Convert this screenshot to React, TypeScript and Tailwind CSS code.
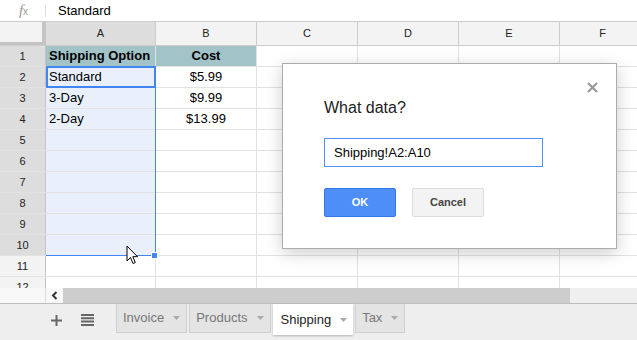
import React from 'react';

const rows: { n: number; a?: string; b?: string }[] = [
  { n: 1, a: 'Shipping Option', b: 'Cost' },
  { n: 2, a: 'Standard', b: '$5.99' },
  { n: 3, a: '3-Day', b: '$9.99' },
  { n: 4, a: '2-Day', b: '$13.99' },
  { n: 5 }, { n: 6 }, { n: 7 }, { n: 8 }, { n: 9 }, { n: 10 }, { n: 11 }, { n: 12 },
];

const Caret = () => (
  <svg width="7" height="4" viewBox="0 0 7 4" className="ml-[9px]">
    <path d="M0 0 L7 0 L3.5 4 Z" fill="#aaaaaa" />
  </svg>
);

const Tab = ({ label, active }: { label: string; active?: boolean }) => (
  <div
    className={
      active
        ? 'flex h-[31px] items-center bg-white pl-[8px] pr-[6px] text-[#222] shadow-[0_1px_2px_rgba(0,0,0,0.25)]'
        : 'flex h-[29px] items-center border border-t-0 border-[#cfcfcf] bg-[#e4e4e4] pl-[6px] pr-[6px] text-[#777]'
    }
  >
    <span className="text-[13px]">{label}</span>
    <Caret />
  </div>
);

export default function App() {
  return (
    <div className="relative flex h-[340px] w-[637px] flex-col overflow-hidden bg-white font-['Liberation_Sans',Arial,sans-serif] text-[#222]">
      {/* formula bar */}
      <div className="flex h-[21px] items-center">
        <div className="flex w-[45px] justify-center pl-[2px]">
          <span className="font-['Liberation_Serif',serif] text-[15px] italic leading-none text-[#999]">
            f<span className="text-[10px] not-italic font-['Liberation_Sans',sans-serif]">x</span>
          </span>
        </div>
        <div className="h-[12px] w-px bg-[#dcdcdc]" />
        <span className="ml-[12px] text-[13px] text-black">Standard</span>
      </div>

      {/* grid */}
      <div className="h-[267px] overflow-hidden">
        <div className="flex h-[25px] border-y border-[#cccccc] text-[11px]">
          <div className="w-[46px] border-r-[4px] border-b-[3px] border-[#c4c4c4] bg-[#f3f3f3]" />
          <div className="flex w-[110px] items-center justify-center border-r border-[#cccccc] bg-[#dddddd]">A</div>
          {['B', 'C', 'D', 'E'].map((c) => (
            <div key={c} className="flex w-[101px] items-center justify-center border-r border-[#cccccc] bg-[#f3f3f3]">{c}</div>
          ))}
          <div className="flex flex-1 items-center justify-center bg-[#f3f3f3] pl-[8px]">F</div>
        </div>
        {rows.map((r) => {
          const sel = r.n >= 2 && r.n <= 10;
          const head = r.n === 1;
          return (
            <div key={r.n} className="flex h-[21px] border-b border-[#e2e2e2] text-[13px]">
              <div
                className={`flex w-[46px] items-center justify-center border-r border-[#c4c4c4] text-[11px] ${
                  r.n <= 10 ? 'bg-[#dddddd]' : 'bg-[#f3f3f3]'
                }`}
              >
                {r.n}
              </div>
              <div
                className={`flex w-[110px] items-center border-r border-[#e2e2e2] pl-[3px] text-black ${
                  head ? 'bg-[#a2c4c9] font-bold' : sel ? 'bg-[#e9f0fc]' : ''
                }`}
              >
                {r.a}
              </div>
              <div
                className={`flex w-[101px] items-center justify-center border-r border-[#e2e2e2] text-black ${
                  head ? 'bg-[#a2c4c9] font-bold' : ''
                }`}
              >
                {r.b}
              </div>
              <div className="w-[101px] border-r border-[#e2e2e2]" />
              <div className="w-[101px] border-r border-[#e2e2e2]" />
              <div className="w-[101px] border-r border-[#e2e2e2]" />
              <div className="flex-1" />
            </div>
          );
        })}
      </div>

      {/* horizontal scroll */}
      <div className="flex h-[15px]">
        <div className="w-[46px] border-r border-[#dcdcdc] bg-[#f8f8f8]" />
        <div className="flex w-[17px] items-center justify-center bg-[#f8f8f8]">
          <svg width="7" height="9" viewBox="0 0 7 9">
            <path d="M5.5 1 L2 4.5 L5.5 8" stroke="#333" strokeWidth="2" fill="none" />
          </svg>
        </div>
        <div className="w-[507px] bg-[#cdcdcd]" />
        <div className="flex-1 bg-[#efefef]" />
      </div>

      {/* sheet tabs */}
      <div className="flex h-[37px] items-start border-t border-[#bdbdbd] bg-[#eeeeee]">
        <div className="flex h-[32px] w-[116px] items-center">
          <svg width="11" height="11" viewBox="0 0 11 11" className="ml-[51px]">
            <path d="M0 5.5 H11 M5.5 0 V11" stroke="#666" strokeWidth="2" />
          </svg>
          <svg width="13" height="12" viewBox="0 0 13 12" className="ml-[19px]">
            <path d="M0 1 H13 M0 4.3 H13 M0 7.6 H13 M0 11 H13" stroke="#666" strokeWidth="2" />
          </svg>
        </div>
        <div className="flex items-start gap-[2px]">
          <Tab label="Invoice" />
          <Tab label="Products" />
          <Tab label="Shipping" active />
          <Tab label="Tax" />
        </div>
      </div>

      {/* selection overlay */}
      <div className="pointer-events-none absolute left-[46px] top-[66px] h-[190px] w-[110px] border-r border-b border-[#4285f4]" />
      <div className="pointer-events-none absolute left-[46px] top-[66px] h-[22px] w-[110px] border-2 border-[#4285f4]" />
      <div className="absolute left-[151px] top-[252px] h-[7px] w-[7px] border border-white bg-[#4285f4]" />

      {/* dialog */}
      <div className="absolute left-[282px] top-[63px] flex h-[186px] w-[335px] flex-col border border-[#acacac] bg-white pl-[41px] shadow-[0_4px_16px_rgba(0,0,0,0.2)]">
        <svg width="11" height="11" viewBox="0 0 11 11" className="absolute right-[18px] top-[18px]">
          <path d="M1 1 L10 10 M10 1 L1 10" stroke="#999" strokeWidth="2.2" />
        </svg>
        <div className="mt-[35px] text-[16px] leading-[18px] text-[#222]">What data?</div>
        <div className="mt-[21px] flex h-[29px] w-[219px] items-center border border-[#4d90fe] pl-[9px] text-[13px] text-black">
          Shipping!A2:A10
        </div>
        <div className="mt-[21px] flex gap-[16px]">
          <div className="flex h-[29px] w-[72px] items-center justify-center rounded-[2px] border border-[#3079ed] bg-[#4d8ef8] text-[11px] font-bold text-white">
            OK
          </div>
          <div className="flex h-[29px] w-[72px] items-center justify-center rounded-[2px] border border-[#dcdcdc] bg-[#f3f3f3] text-[11px] font-bold text-[#444]">
            Cancel
          </div>
        </div>
      </div>

      {/* mouse pointer */}
      <svg width="13" height="21" viewBox="0 0 13 21" className="absolute left-[126px] top-[245px]">
        <path d="M1 1 L1 16 L4.5 12.5 L7 18.5 L9.3 17.5 L6.8 11.7 L11.5 11.7 Z" fill="white" stroke="black" strokeWidth="1" strokeLinejoin="round" />
      </svg>
    </div>
  );
}
